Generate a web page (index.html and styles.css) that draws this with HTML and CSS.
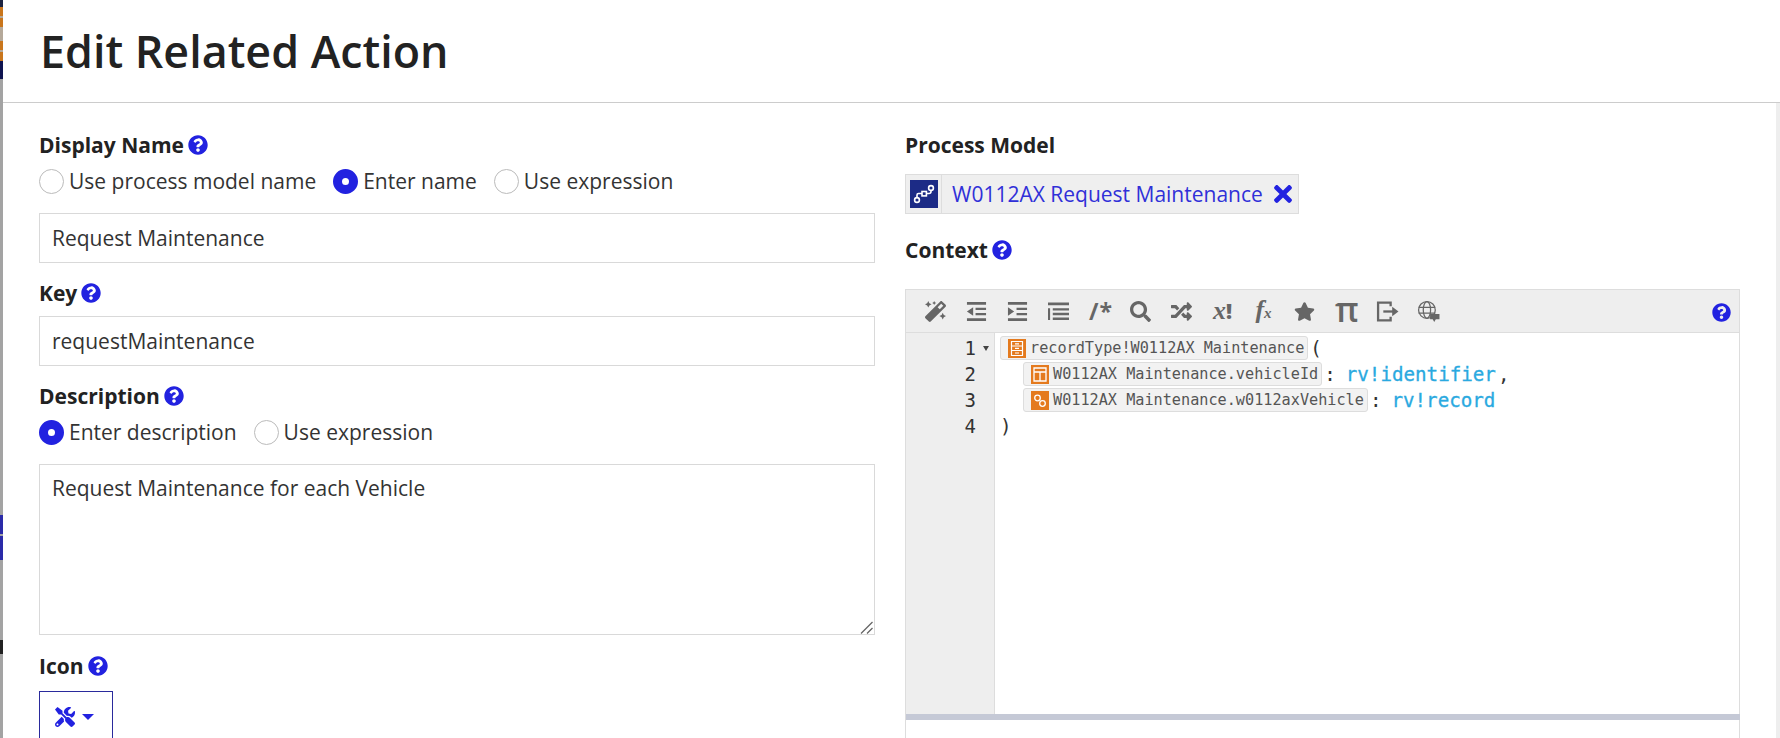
FILE: index.html
```html
<!DOCTYPE html>
<html lang="en">
<head>
    <meta charset="UTF-8" />
    <meta name="viewport" content="width=device-width, initial-scale=1" />
    <title>Edit Related Action</title>
    <link rel="stylesheet" href="styles.css">
</head>
<body>
    <svg class="icon-defs" aria-hidden="true" focusable="false">
        <symbol id="i-help" viewBox="0 0 512 512"><path d="M504 256c0 136.997-111.043 248-248 248S8 392.997 8 256C8 119.083 119.043 8 256 8s248 111.083 248 248zM262.655 90c-54.497 0-89.255 22.957-116.549 63.758-3.536 5.286-2.353 12.415 2.715 16.258l34.699 26.31c5.205 3.947 12.621 3.008 16.665-2.122 17.864-22.658 30.113-35.797 57.303-35.797 20.429 0 45.698 13.148 45.698 32.958 0 14.976-12.363 22.667-32.534 33.976C247.128 238.528 216 254.941 216 296v4c0 6.627 5.373 12 12 12h56c6.627 0 12-5.373 12-12v-1.333c0-28.462 83.186-29.647 83.186-106.667 0-58.002-60.165-111-116.531-111zM256 338c-25.365 0-46 20.635-46 46 0 25.364 20.635 46 46 46s46-20.636 46-46c0-25.365-20.635-46-46-46z"/></symbol>
    </svg>

    <div class="backdrop" aria-hidden="true"></div>

    <main class="dialog" role="main" aria-labelledby="page-title">
        <header class="dialog-header">
            <h1 id="page-title">Edit Related Action</h1>
        </header>

        <div class="dialog-body">
            <section class="col">
                <div class="field-label">Display Name <svg class="help"><use href="#i-help"/></svg></div>
                <div class="radios">
                    <label class="radio"><span class="dot"></span>Use process model name</label>
                    <label class="radio"><span class="dot on"></span>Enter name</label>
                    <label class="radio"><span class="dot"></span>Use expression</label>
                </div>
                <input class="text-input" type="text" value="Request Maintenance">

                <div class="field-label">Key <svg class="help"><use href="#i-help"/></svg></div>
                <input class="text-input" type="text" value="requestMaintenance">

                <div class="field-label">Description <svg class="help"><use href="#i-help"/></svg></div>
                <div class="radios">
                    <label class="radio"><span class="dot on"></span>Enter description</label>
                    <label class="radio"><span class="dot"></span>Use expression</label>
                </div>
                <div class="area-wrap">
                    <textarea class="text-area">Request Maintenance for each Vehicle</textarea>
                    <svg class="grip" viewBox="0 0 13 13" fill="none" stroke="#666" stroke-width="1.300"><path d="M1 12.500L12.500 1M7 12.500l5.500-5.500"/></svg>
                </div>

                <div class="field-label">Icon <svg class="help"><use href="#i-help"/></svg></div>
                <button class="icon-picker" type="button">
                    <svg class="tools" viewBox="0 0 512 512"><path d="M501.1 395.7L384 278.6c-23.1-23.1-57.6-27.6-85.4-13.9L192 158.1V96L64 0 0 64l96 128h62.1l106.6 106.6c-13.6 27.8-9.2 62.3 13.9 85.4l117.1 117.1c14.6 14.6 38.2 14.6 52.7 0l52.7-52.7c14.5-14.6 14.5-38.2 0-52.7zM331.7 225c28.3 0 54.9 11 74.9 31l19.4 19.4c15.8-6.9 30.8-16.5 43.8-29.5 37.1-37.1 49.7-89.3 37.9-136.7-2.2-9-13.5-12.1-20.1-5.5l-74.4 74.4-67.9-11.3L334 98.9l74.4-74.4c6.6-6.6 3.4-17.9-5.7-20.2-47.4-11.7-99.6.9-136.6 37.9-28.5 28.5-41.9 66.1-41.2 103.6l82.1 82.1c8.1-1.9 16.5-2.9 24.7-2.9zm-103.9 82l-56.7-56.7L18.7 402.8c-25 25-25 65.5 0 90.5s65.5 25 90.5 0l123.6-123.6c-7.6-19.9-9.9-41.6-5-62.7zM64 472c-13.2 0-24-10.8-24-24 0-13.3 10.7-24 24-24s24 10.7 24 24c0 13.2-10.7 24-24 24z"/></svg>
                    <span class="caret"></span>
                </button>
            </section>

            <section class="col">
                <div class="field-label">Process Model</div>
                <div class="pm-row">
                    <div class="pm-chip">
                        <span class="pm-thumb">
                            <svg viewBox="0 0 28 28" width="28" height="28" fill="none" stroke="#fff" stroke-width="1.600">
                                <circle cx="7" cy="20" r="2.400"/>
                                <rect x="12" y="11.500" width="4.400" height="4.400"/>
                                <circle cx="21" cy="8" r="2.400"/>
                                <path d="M7 17.500v-2.500q0-1.500 1.500-1.500H12M16.400 13.500H19q2 0 2-2v-1"/>
                            </svg>
                        </span>
                        <span class="pm-name">W0112AX Request Maintenance</span>
                        <svg class="pm-x" viewBox="0 0 352 512"><path d="M242.72 256l100.07-100.07c12.28-12.28 12.28-32.19 0-44.48l-22.24-22.24c-12.28-12.28-32.19-12.28-44.48 0L176 189.28 75.93 89.21c-12.28-12.28-32.19-12.28-44.48 0L9.21 111.45c-12.28 12.28-12.28 32.19 0 44.48L109.28 256 9.21 356.07c-12.28 12.28-12.28 32.19 0 44.48l22.24 22.24c12.28 12.28 32.2 12.28 44.48 0L176 322.72l100.07 100.07c12.28 12.28 32.2 12.28 44.48 0l22.24-22.24c12.28-12.28 12.28-32.19 0-44.48L242.72 256z"/></svg>
                    </div>
                </div>

                <div class="field-label context-label">Context <svg class="help"><use href="#i-help"/></svg></div>

                <div class="editor">
                    <div class="toolbar">
                        <div class="tools-row">
                            <svg class="tb" viewBox="0 0 512 512"><path d="M224 96l16-32 32-16-32-16-16-32-16 32-32 16 32 16 16 32zM80 160l26.660-53.330L160 80l-53.340-26.670L80 0 53.340 53.330 0 80l53.340 26.670L80 160zm352 128l-26.660 53.330L352 368l53.340 26.670L432 448l26.660-53.330L512 368l-53.340-26.670L432 288zm70.620-193.770L417.770 9.380C411.530 3.120 403.340 0 395.150 0c-8.190 0-16.380 3.120-22.630 9.380L9.380 372.520c-12.500 12.500-12.500 32.760 0 45.250l84.850 84.850c6.250 6.250 14.440 9.370 22.620 9.370 8.190 0 16.380-3.120 22.630-9.370l363.140-363.150c12.500-12.480 12.500-32.750 0-45.240zM359.450 203.460l-50.910-50.910 86.600-86.600 50.910 50.910-86.600 86.600z"/></svg>
                            <svg class="tb" viewBox="0 0 22 22"><path d="M1 1h20v2.800H1zM10 7h11v2.500H10zM10 12.500h11V15H10zM1 18.200h20V21H1zM7.500 6.500v9L1 11z"/></svg>
                            <svg class="tb" viewBox="0 0 22 22"><path d="M1 1h20v2.800H1zM10 7h11v2.500H10zM10 12.500h11V15H10zM1 18.200h20V21H1zM1 6.500v9L7.500 11z"/></svg>
                            <svg class="tb" viewBox="0 0 22 22"><path d="M0 1.500h22v3H0zM5 7.500h17v2.500H5zM5 12.300h17v2.500H5zM5 17.200h17v2.800H5zM0 7.500h2.200V20H0z"/></svg>
                            <span class="tb-text comment">/*</span>
                            <svg class="tb" viewBox="0 0 512 512"><path d="M505 442.700L405.300 343c-4.500-4.500-10.600-7-17-7H372c27.600-35.300 44-79.700 44-128C416 93.100 322.900 0 208 0S0 93.100 0 208s93.100 208 208 208c48.300 0 92.700-16.400 128-44v16.300c0 6.400 2.500 12.500 7 17l99.700 99.700c9.400 9.400 24.600 9.400 33.900 0l28.300-28.300c9.400-9.400 9.400-24.600.1-34zM208 336c-70.700 0-128-57.200-128-128 0-70.700 57.200-128 128-128 70.700 0 128 57.200 128 128 0 70.700-57.200 128-128 128z"/></svg>
                            <svg class="tb" viewBox="0 0 512 512"><path d="M504.971 359.029c9.373 9.373 9.373 24.569 0 33.941l-80 79.984c-15.010 15.010-40.971 4.490-40.971-16.971V416h-58.785a12.004 12.004 0 0 1-8.773-3.812l-70.556-75.596 53.333-57.143L352 336h32v-39.981c0-21.438 25.943-31.998 40.971-16.971l80 79.981zM12 176h84l52.781 56.551 53.333-57.143-70.556-75.596A11.999 11.999 0 0 0 122.785 96H12c-6.627 0-12 5.373-12 12v56c0 6.627 5.373 12 12 12zm372 0v39.984c0 21.460 25.961 31.980 40.971 16.971l80-79.984c9.373-9.373 9.373-24.569 0-33.941l-80-79.981C409.943 24.021 384 34.582 384 56.019V96h-58.785a12.004 12.004 0 0 0-8.773 3.812L96 336H12c-6.627 0-12 5.373-12 12v56c0 6.627 5.373 12 12 12h110.785c3.326 0 6.503-1.381 8.773-3.812L352 176h32z"/></svg>
                            <span class="tb-text var"><i>x</i><b>!</b></span>
                            <span class="tb-text fx">f<small>x</small></span>
                            <svg class="tb" viewBox="0 0 576 512"><path d="M259.300 17.800L194 150.200 47.900 171.500c-26.200 3.800-36.700 36.100-17.700 54.600l105.700 103-25 145.500c-4.500 26.300 23.200 46 46.400 33.700L288 439.600l130.700 68.700c23.200 12.200 50.900-7.400 46.400-33.700l-25-145.500 105.700-103c19-18.500 8.500-50.800-17.700-54.600L382 150.200 316.700 17.800c-11.700-23.600-45.600-23.900-57.400 0z"/></svg>
                            <span class="tb-text pi">π</span>
                            <svg class="tb tb-line" viewBox="0 0 22 22" stroke="#666" stroke-width="2.200"><path d="M14 6V2.500H2v17h12V16"/><path d="M7 11h10"/><path d="M15.500 6.500l6 4.500-6 4.500z" fill="#666" stroke="none"/></svg>
                            <svg class="tb tb-line" viewBox="0 0 22 22" stroke="#666" stroke-width="1.200"><circle cx="9.500" cy="9.500" r="8"/><ellipse cx="9.500" cy="9.500" rx="3.500" ry="8"/><path d="M1.500 7h16M1.500 12.500h16"/><path d="M12.500 13.500h9v5h-3.500l-1.500 2.500-1.500-2.500h-2.500z" fill="#666" stroke="none"/></svg>
                        </div>
                        <svg class="help help-tb"><use href="#i-help"/></svg>
                    </div>

                    <div class="code-area">
                        <div class="gutter">
                            <div class="ln">1<span class="fold"></span></div>
                            <div class="ln">2</div>
                            <div class="ln">3</div>
                            <div class="ln">4</div>
                        </div>
                        <div class="code">
                            <div class="line">
                                <span class="token">
                                    <svg class="tk-icon" viewBox="0 0 18 19"><rect width="18" height="19" fill="#e47a1e"/><path d="M3.500 2.500h11v4.500h-11zM3.500 7h11v4.500h-11zM3.500 11.500h11v5h-11zM7 4.800h4M7 9.300h4M7 14h4" fill="none" stroke="#fff" stroke-width="1.200"/></svg>recordType!W0112AX Maintenance</span><span class="paren">(</span>
                            </div>
                            <div class="line indent">
                                <span class="token">
                                    <svg class="tk-icon" viewBox="0 0 18 19"><rect width="18" height="19" fill="#e47a1e"/><path d="M3 3h12v13H3zM3 7h12M9 7v9" fill="none" stroke="#fff" stroke-width="1.300"/></svg>W0112AX Maintenance.vehicleId</span><span class="colon">:</span><span class="rv">rv!identifier</span><span class="paren">,</span>
                            </div>
                            <div class="line indent">
                                <span class="token">
                                    <svg class="tk-icon" viewBox="0 0 18 19"><rect width="18" height="19" fill="#e47a1e"/><circle cx="6.500" cy="7" r="2.800" fill="none" stroke="#fff" stroke-width="1.300"/><circle cx="11.500" cy="12.500" r="2.800" fill="none" stroke="#fff" stroke-width="1.300"/></svg>W0112AX Maintenance.w0112axVehicle</span><span class="colon">:</span><span class="rv">rv!record</span>
                            </div>
                            <div class="line"><span class="paren close">)</span></div>
                        </div>
                    </div>
                    <div class="splitter"></div>
                    <div class="results"></div>
                </div>
            </section>
        </div>
    </main>
</body>
</html>
```

FILE: styles.css
```css
*, *::before, *::after {
    box-sizing: border-box;
}

body {
    margin: 0;
    height: 738px;
    overflow: hidden;
    background: #fff;
    font-family: "Open Sans", "Liberation Sans", sans-serif;
    color: #222;
    display: flex;
}

.icon-defs {
    position: absolute;
    width: 0;
    height: 0;
}

/* Sliver of the page behind the dialog */
.backdrop {
    flex: 0 0 3px;
    background: linear-gradient(to bottom,
        #1c2340 0, #1c2340 7px,
        #c9761c 7px, #c9761c 16px,
        #b5a99a 16px, #b5a99a 18px,
        #c9761c 18px, #c9761c 27px,
        #b5a99a 27px, #b5a99a 41px,
        #c9761c 41px, #c9761c 50px,
        #b5a99a 50px, #b5a99a 52px,
        #c9761c 52px, #c9761c 61px,
        #0f1450 61px, #0f1450 79px,
        #a3a3a3 79px, #a3a3a3 515px,
        #2a2aa8 515px, #2a2aa8 534px,
        #a3a3a3 534px, #a3a3a3 536px,
        #2a2aa8 536px, #2a2aa8 560px,
        #a3a3a3 560px, #a3a3a3 640px,
        #222 640px, #222 654px,
        #a3a3a3 654px);
}

.dialog {
    flex: 1;
    min-width: 0;
}

.dialog-header {
    height: 103px;
    padding: 21px 0 0 37px;
    border-bottom: 1px solid #ccc;
}

h1 {
    margin: 0;
    font-size: 44.8px;
    line-height: 60px;
    font-weight: 600;
    color: #222;
}

.dialog-body {
    display: grid;
    grid-template-columns: 836px 835px;
    column-gap: 30px;
    padding: 28px 0 0 36px;
    height: 635px;
    overflow: hidden;
    border-right: 4px solid #eee;
}

.field-label {
    display: flex;
    align-items: center;
    gap: 4px;
    height: 27px;
    margin-bottom: 10px;
    font-size: 21px;
    font-weight: 700;
    color: #222;
}

.help {
    width: 20px;
    height: 20px;
    fill: #2222e0;
}

.radios {
    display: flex;
    gap: 17px;
    height: 45px;
    align-items: flex-start;
}

.radio {
    display: flex;
    align-items: center;
    gap: 5px;
    font-size: 21px;
    line-height: 27px;
    color: #333;
}

.dot {
    width: 25px;
    height: 25px;
    border: 1px solid #bbb;
    border-radius: 50%;
    background: #fff;
}

.dot.on {
    border: 9px solid #2222e0;
}

.text-input, .text-area {
    display: block;
    width: 100%;
    border: 1px solid #d9d9d9;
    border-radius: 0;
    padding: 0 12px;
    font-family: inherit;
    font-size: 21px;
    color: #333;
    background: #fff;
    outline: none;
}

.text-input {
    height: 50px;
    margin-bottom: 16px;
}

.area-wrap {
    position: relative;
    margin-bottom: 17px;
}

.text-area {
    height: 171px;
    padding-top: 9px;
    line-height: 28px;
    resize: none;
}

.grip {
    position: absolute;
    right: 2px;
    bottom: 1px;
    width: 13px;
    height: 13px;
}

.icon-picker {
    display: flex;
    align-items: flex-start;
    gap: 7px;
    width: 74px;
    height: 90px;
    margin-top: 12px;
    padding: 15px 0 0 15px;
    background: #fff;
    border: 1px solid #2a2a9c;
}

.tools {
    width: 20px;
    height: 20px;
    fill: #2222e0;
}

.caret {
    margin-top: 7px;
    border-left: 6px solid transparent;
    border-right: 6px solid transparent;
    border-top: 6px solid #2222e0;
}

.pm-row {
    display: flex;
    margin-top: 16px;
}

.pm-chip {
    display: flex;
    align-items: center;
    height: 40px;
    padding: 0 6px 0 0;
    background: #efefef;
    border: 1px solid #ddd;
}

.pm-thumb {
    display: flex;
    width: 36px;
    height: 38px;
    align-items: center;
    justify-content: center;
    border-right: 1px solid #ddd;
}

.pm-thumb svg {
    background: #1c2b86;
}

.pm-name {
    margin-left: 10px;
    font-size: 21px;
    color: #3030d8;
}

.pm-x {
    margin-left: 11px;
    width: 18px;
    height: 26px;
    fill: #2222e0;
}

.context-label {
    margin-top: 22px;
}

.editor {
    margin-top: 26px;
    border-left: 1px solid #ddd;
    border-right: 1px solid #ddd;
    border-top: 1px solid #ddd;
}

.toolbar {
    display: flex;
    justify-content: space-between;
    align-items: center;
    height: 43px;
    padding: 0 8px 0 19px;
    background: #eee;
    border-bottom: 1px solid #ddd;
    color: #666;
}

.tools-row {
    display: flex;
    align-items: center;
    gap: 20px;
}

.tb {
    width: 21px;
    height: 21px;
    fill: #666;
}

.tb-line {
    width: 23px;
    height: 23px;
    margin-right: -2px;
    fill: none;
}

.tb-text {
    display: block;
    width: 21px;
    text-align: center;
    line-height: 21px;
    color: #666;
    font-weight: 700;
    white-space: nowrap;
}

.comment {
    font-family: "Open Sans", sans-serif;
    font-size: 23px;
    letter-spacing: 1px;
}

.var, .fx {
    font-family: "Liberation Serif", serif;
    font-style: italic;
    font-size: 26px;
}

.var b {
    font-family: "Open Sans", sans-serif;
    font-style: normal;
    font-size: 21px;
}

.fx small {
    font-size: 15px;
}

.pi {
    margin-top: -4px;
    font-family: "Open Sans", sans-serif;
    font-size: 34px;
    font-weight: 600;
}

.help-tb {
    margin-top: 2px;
    width: 19px;
    height: 19px;
}

.code-area {
    display: flex;
    height: 381px;
    background: #fff;
}

.gutter {
    flex: 0 0 89px;
    padding-top: 2px;
    background: #eee;
    border-right: 1px solid #ddd;
}

.ln {
    position: relative;
    height: 26px;
    padding-right: 18px;
    text-align: right;
    font-family: "DejaVu Sans Mono", monospace;
    font-size: 19px;
    line-height: 26px;
    color: #333;
}

.fold {
    position: absolute;
    right: 5px;
    top: 11px;
    border-left: 3.5px solid transparent;
    border-right: 3.5px solid transparent;
    border-top: 5px solid #444;
}

.code {
    padding: 2px 0 0 5px;
    font-family: "DejaVu Sans Mono", monospace;
}

.line {
    display: flex;
    align-items: center;
    height: 26px;
    font-size: 19.2px;
}

.line.indent {
    padding-left: 23px;
}

.token {
    display: flex;
    align-items: center;
    height: 24px;
    padding: 0 3px 0 7px;
    background: #f2f2f2;
    border: 1px solid #ddd;
    border-radius: 3px;
    font-size: 15.2px;
    color: #555;
    white-space: nowrap;
}

.tk-icon {
    width: 18px;
    height: 19px;
    margin-right: 4px;
}

.paren {
    color: #333;
    margin-left: 2px;
}

.paren.close {
    margin-left: 0;
}

.colon {
    color: #333;
    margin: 0 10px 0 2px;
}

.rv {
    color: #2aa9e0;
    -webkit-text-stroke: 0.3px #2aa9e0;
}

.splitter {
    height: 6px;
    background: #c5c9d6;
    margin-right: -1px;
}

.results {
    height: 60px;
    background: #fff;
}
```
